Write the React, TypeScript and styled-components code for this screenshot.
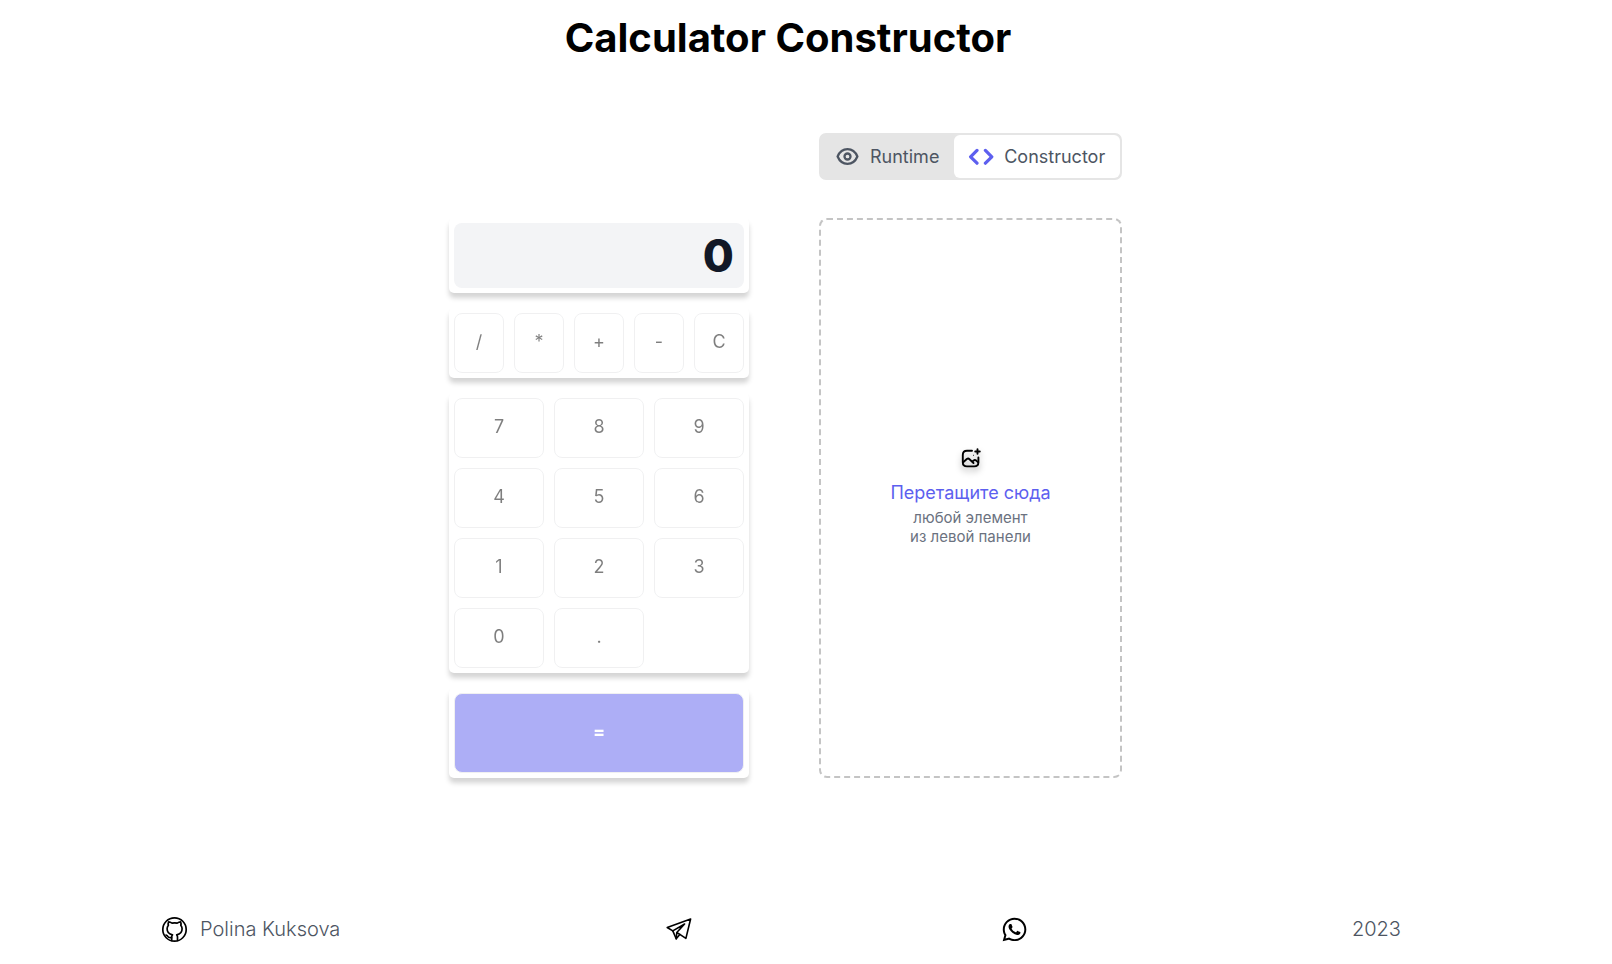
import React from "react";
import styled, { createGlobalStyle } from "styled-components";
import { FaWhatsapp } from "react-icons/fa";

const GlobalStyle = createGlobalStyle`
  * { box-sizing: border-box; }
  body {
    margin: 0;
    background: #fff;
    color: #000;
    font-family: Inter, "Liberation Sans", sans-serif;
  }
`;

const Page = styled.div`
  display: flex;
  flex-direction: column;
  min-height: 100vh;
  padding: 14px 36px 0 0;
`;

const Title = styled.h1`
  margin: 0 0 71px;
  font-size: 40px;
  font-weight: 700;
  line-height: 48px;
  text-align: center;
`;

const Main = styled.main`
  display: flex;
  justify-content: center;
  align-items: flex-end;
  gap: 70px;
  padding-right: 5px;
`;

const Palette = styled.section`
  display: flex;
  flex-direction: column;
  gap: 15px;
  width: 300px;
`;

const Block = styled.div<{ $columns: number }>`
  display: grid;
  grid-template-columns: repeat(${(p) => p.$columns}, 1fr);
  gap: 10px;
  padding: 5px;
  border-radius: 5px;
  background: #fff;
  box-shadow: 0 5px 5px rgba(0, 0, 0, 0.17);
  cursor: move;
`;

const Display = styled.output`
  display: flex;
  align-items: center;
  justify-content: flex-end;
  height: 65px;
  padding: 0 10px;
  border-radius: 8px;
  background: #f3f4f6;
  color: #111827;
  font-size: 45px;
  font-weight: 800;
  line-height: 55px;
`;

const Key = styled.button<{ $primary?: boolean }>`
  height: ${(p) => (p.$primary ? 80 : 60)}px;
  padding: 0 0 2px;
  border: 1px solid #e2e3e5;
  border-radius: 8px;
  background: ${(p) => (p.$primary ? "#5d5fef" : "#fff")};
  color: ${(p) => (p.$primary ? "#fff" : "#000")};
  font-family: inherit;
  font-size: 18px;
  font-weight: ${(p) => (p.$primary ? 700 : 400)};
  line-height: 22px;
  opacity: 0.5;
`;

const Workspace = styled.section`
  display: flex;
  flex-direction: column;
  gap: 38px;
  width: 303px;
`;

const Toggle = styled.div`
  display: flex;
  padding: 2px;
  border-radius: 7px;
  background: #e5e5e5;
`;

const ToggleButton = styled.button<{ $active?: boolean }>`
  display: flex;
  flex: 1 1 auto;
  align-items: center;
  gap: 10px;
  padding: 9px 14px;
  border: 0;
  border-radius: 6px;
  background: ${(p) => (p.$active ? "#fff" : "transparent")};
  color: #4d5562;
  font-family: inherit;
  font-size: 18px;
  line-height: 23px;
`;

const DropArea = styled.div`
  display: flex;
  flex-direction: column;
  align-items: center;
  justify-content: center;
  height: 560px;
  padding-bottom: 3px;
  border: 2px dashed #c4c4c4;
  border-radius: 8px;
`;

const DropTitle = styled.p`
  margin: 10px 0 4px;
  color: #5d5fef;
  font-size: 18px;
  line-height: 23px;
`;

const DropHint = styled.p`
  margin: 0;
  color: #6b7280;
  font-size: 15px;
  line-height: 19px;
  text-align: center;
`;

const Footer = styled.footer`
  display: flex;
  align-items: center;
  justify-content: space-between;
  margin-top: 136px;
  padding: 0 175px 0 160px;
  color: #4d5562;
  font-size: 20px;
  font-weight: 300;
  line-height: 30px;
`;

const FooterLink = styled.a`
  display: flex;
  align-items: center;
  gap: 11px;
  color: inherit;
  text-decoration: none;
`;

const AuthorLink = styled(FooterLink)`
  padding-right: 16px;
`;

const Year = styled.span`
  padding-left: 16px;
`;

const Svg = styled.svg`
  display: block;
  flex: none;
  fill: none;
  stroke: currentColor;
  stroke-linecap: round;
  stroke-linejoin: round;
`;

const CodeSvg = styled(Svg)`
  color: #5d5fef;
`;

const DropSvg = styled(Svg)`
  color: #000;
  filter: drop-shadow(0 4px 3px rgba(0, 0, 0, 0.3));
`;

const ContactSvg = styled(Svg)`
  color: #000;
`;

const WhatsappMark = styled(FaWhatsapp)`
  display: block;
  color: #000;
`;

const EyeIcon = () => (
  <Svg width="25" height="25" viewBox="0 0 25 25" strokeWidth="2.3" aria-hidden="true">
    <path d="M2.6 12.5C4.6 7.8 8.2 5.2 12.5 5.2s7.9 2.6 9.9 7.3c-2 4.7-5.6 7.3-9.9 7.3S4.6 17.2 2.6 12.5Z" />
    <circle cx="12.5" cy="12.5" r="3" />
  </Svg>
);

const CodeIcon = () => (
  <CodeSvg width="26" height="25" viewBox="0 0 26 25" strokeWidth="3.2" aria-hidden="true">
    <path d="M9 6.4 2.6 12.8 9 19.2M17.4 6.4l6.4 6.4-6.4 6.4" />
  </CodeSvg>
);

const ImagePlusIcon = () => (
  <DropSvg width="24" height="24" viewBox="0 0 24 24" strokeWidth="1.9" aria-hidden="true">
    <path d="M13 3.8H8Q3.8 3.8 3.8 8v7.2q0 4.2 4.2 4.2h7.2q4.2 0 4.2-4.2V10.5" />
    <path d="m4.2 15.2 3.6-3.2q1.4-1 2.7.2l4 3.8M13.2 14.6l1.5-1.2q1.2-.9 2.5.2l2 1.8M18.5 2.2v4.6M16.2 4.5h4.6" />
    <path d="M14.4 8.3h.01" strokeWidth="1" />
  </DropSvg>
);

const GithubIcon = () => (
  <ContactSvg width="29" height="29" viewBox="0 0 29 29" strokeWidth="1.7" aria-hidden="true">
    <circle cx="14.5" cy="14.5" r="11.7" />
    <path d="M11.7 25.5v-3.4c0-1.2.3-1.8.8-2.3-3.4-.5-5.4-2.3-5.4-6 0-1.5.5-2.6 1.3-3.6-.4-1.2-.3-2.3.2-3.4 1.3.1 2.4.6 3.4 1.3 1.7-.4 3.5-.4 5.2 0 1-.7 2.1-1.2 3.4-1.3.5 1.1.6 2.2.2 3.4.8 1 1.3 2.1 1.3 3.6 0 3.7-2 5.5-5.4 6 .5.5.8 1.1.8 2.3v3.4" />
    <path d="M11.5 22.6c-2.3.5-3.2-.3-4-1.5-.5-.7-.9-1-1.5-1.1" />
  </ContactSvg>
);

const TelegramIcon = () => (
  <ContactSvg width="28" height="28" viewBox="0 0 28 28" strokeWidth="1.6" aria-hidden="true">
    <path d="M25.6 4 2.2 12.5l5.6 3.4 3.4 7.9 3.6-4.4 6.1 4L25.6 4Z" />
    <path d="m7.8 15.9 11.8-6.9-7.8 8.5 3 1.9M11.8 17.5l-.6 6.3" />
  </ContactSvg>
);

const operators = ["/", "*", "+", "-", "C"];
const digits = ["7", "8", "9", "4", "5", "6", "1", "2", "3", "0", "."];

export default function App() {
  return (
    <>
      <GlobalStyle />
      <Page>
        <Title>Calculator Constructor</Title>
        <Main>
          <Palette>
            <Block $columns={1} draggable>
              <Display>0</Display>
            </Block>
            <Block $columns={5} draggable>
              {operators.map((sign) => (
                <Key key={sign} type="button">{sign}</Key>
              ))}
            </Block>
            <Block $columns={3} draggable>
              {digits.map((digit) => (
                <Key key={digit} type="button">{digit}</Key>
              ))}
            </Block>
            <Block $columns={1} draggable>
              <Key type="button" $primary>=</Key>
            </Block>
          </Palette>
          <Workspace>
            <Toggle>
              <ToggleButton type="button" aria-pressed="false">
                <EyeIcon />
                Runtime
              </ToggleButton>
              <ToggleButton type="button" aria-pressed="true" $active>
                <CodeIcon />
                Constructor
              </ToggleButton>
            </Toggle>
            <DropArea>
              <ImagePlusIcon />
              <DropTitle>Перетащите сюда</DropTitle>
              <DropHint>
                любой элемент
                <br />
                из левой панели
              </DropHint>
            </DropArea>
          </Workspace>
        </Main>
        <Footer>
          <AuthorLink href="#github">
            <GithubIcon />
            Polina Kuksova
          </AuthorLink>
          <FooterLink href="#telegram" aria-label="Telegram">
            <TelegramIcon />
          </FooterLink>
          <FooterLink href="#whatsapp" aria-label="WhatsApp">
            <WhatsappMark size={27} />
          </FooterLink>
          <Year>2023</Year>
        </Footer>
      </Page>
    </>
  );
}
